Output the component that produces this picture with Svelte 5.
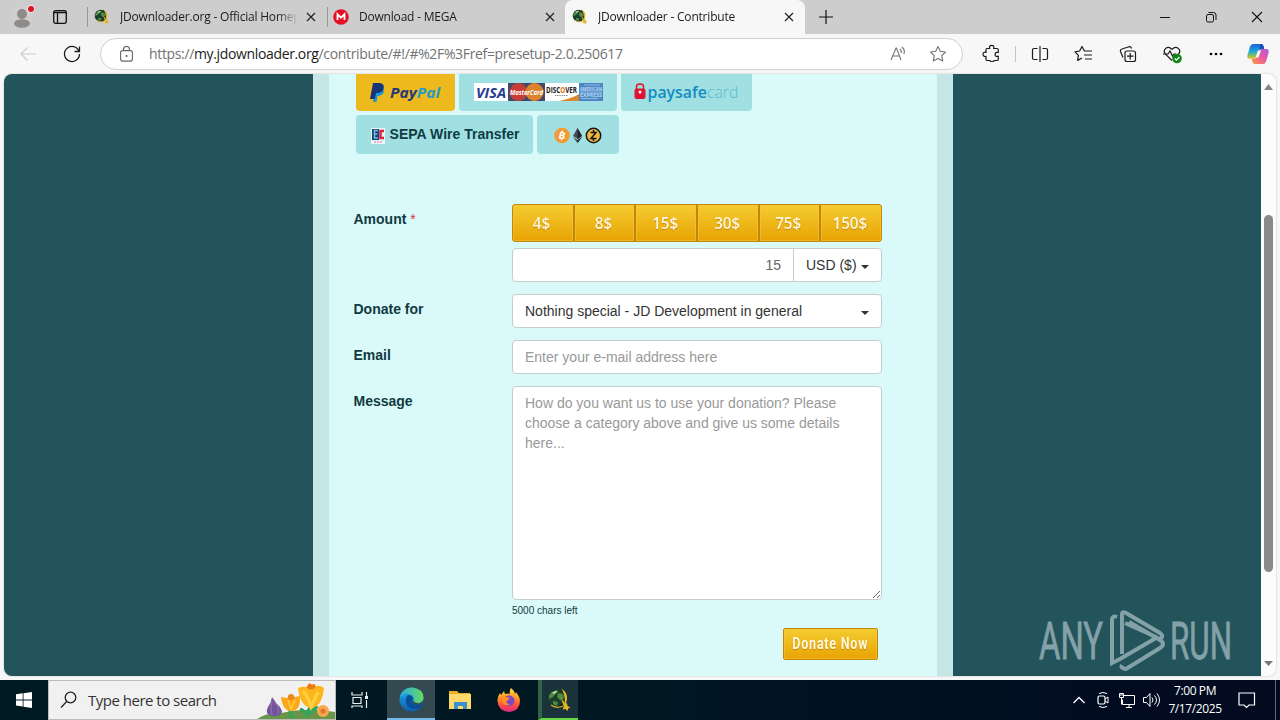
<script lang="ts">
  // Browser tabs, left to right
  const tabs = [
    { title: 'JDownloader.org - Official Homepage', icon: 'jd', active: false },
    { title: 'Download - MEGA', icon: 'mega', active: false },
    { title: 'JDownloader - Contribute', icon: 'jd', active: true }
  ];

  const amounts = [4, 8, 15, 30, 75, 150];

  let amount = $state(15);
  let email = $state('');
  let message = $state('');
  let charsLeft = $derived(5000 - message.length);
</script>

<!-- Globe with the gold swoosh and arrow -->
{#snippet jdIcon()}
  <svg class="jd-icon" viewBox="0 0 24 24" aria-hidden="true">
    <circle cx="10" cy="10" r="9" fill="#1c3d2c" />
    <path d="M2 8q1-4 6-5l1 2-3 4-4 2zM11 5l5 1 1 4-4 2-3-3zM6 13l5 1-1 4-4-2z" fill="#4a8b45" />
    <path d="M5 4.500l4-2 2 1-4 3z" fill="#a9cf95" />
    <path d="M14 2q5 3 4 9-1 5-6 8" fill="none" stroke="#171c14" stroke-width="1.500" />
    <path d="M14 .5q7 4 6 11-.5 5-4 9.500 2-5 1.800-9Q17.500 5 14 .5z" fill="#e2b727" />
    <path d="M4 17q5 4 12 1" fill="none" stroke="#d8ad2b" stroke-width="1.300" />
    <path d="M13.500 9l5 7 1.500-1 .5 3 3 1.500-2 .5-1 3-2-2-3 .5 1.500-2.500z" fill="#e2b727" />
  </svg>
{/snippet}

{#snippet closeIcon()}
  <svg class="close" width="10" height="10" viewBox="0 0 10 10"><path d="M1 1l8 8M9 1L1 9" fill="none" stroke="#222" stroke-width="1.2" /></svg>
{/snippet}

<div class="desktop">
  <!-- Tab strip -->
  <header class="tabstrip">
    <div class="profile">
      <svg width="44" height="34" viewBox="0 0 44 34">
        <circle cx="22" cy="17" r="11" fill="#d1cfce" />
        <circle cx="22" cy="14" r="5" fill="#8f8b89" />
        <ellipse cx="22" cy="23.500" rx="8" ry="4.2" fill="#8f8b89" />
        <circle cx="31" cy="9" r="4" fill="#f2dfdf" />
        <circle cx="31" cy="9" r="3" fill="#dc1626" />
      </svg>
    </div>
    <div class="tab-actions">
      <svg width="14" height="14" viewBox="0 0 14 14"><rect x=".7" y=".7" width="12.6" height="12.6" rx="2" fill="none" stroke="#111" stroke-width="1.3" /><path d="M1 2.500h12M4.5 3v10" stroke="#111" stroke-width="1.300" /></svg>
    </div>
    {#each tabs as tab}
      <div class="tab" class:active={tab.active}>
        {#if tab.icon === 'mega'}
          <svg class="favicon" width="16" height="16" viewBox="0 0 16 16"><circle cx="8" cy="8" r="7.8" fill="#e41226" /><path d="M4.5 11V5.2L8 8.7l3.5-3.5V11" fill="none" stroke="#fff" stroke-width="1.8" /></svg>
        {:else}
          <span class="favicon">{@render jdIcon()}</span>
        {/if}
        <span class="title">{tab.title}</span>
        {@render closeIcon()}
      </div>
    {/each}
    <svg class="new-tab" width="14" height="14" viewBox="0 0 14 14"><path d="M7 0v14M0 7h14" stroke="#111" stroke-width="1.2" /></svg>
    <div class="window-buttons">
      <svg viewBox="0 0 46 34"><path d="M18 17.5h10" stroke="#111" /></svg>
      <svg viewBox="0 0 46 34"><rect x="18.5" y="14.5" width="7" height="7.5" rx="1.5" fill="none" stroke="#111" /><path d="M20.5 12.5h5q2.5 0 2.5 2.5v5" fill="none" stroke="#111" /></svg>
      <svg viewBox="0 0 46 34"><path d="M18 12l10 10M28 12L18 22" stroke="#111" stroke-width="1.1" /></svg>
    </div>
  </header>

  <!-- Address bar and toolbar -->
  <div class="toolbar">
    <svg class="tool" viewBox="0 0 44 40"><path d="M36 20H21M27.5 13.5L21 20l6.5 6.5" fill="none" stroke="#ccc" stroke-width="1.2" /></svg>
    <svg class="tool" viewBox="0 0 44 40"><path d="M29 17.3A7.5 7.5 0 1 0 29.5 20M29.5 12.5v5h-5" fill="none" stroke="#1b1b1b" stroke-width="1.3" /></svg>
    <div class="address">
      <svg class="lock" width="13" height="16" viewBox="0 0 13 16"><rect x=".6" y="4.600" width="11.800" height="10.500" rx="2" fill="none" stroke="#666" stroke-width="1.1" /><path d="M3.500 4.500V3.5a3 3 0 0 1 6 0v1" fill="none" stroke="#666" stroke-width="1.1" /><circle cx="6.500" cy="10" r="1" fill="#555" /></svg>
      <span class="url">https://<b>my.jdownloader.org</b>/contribute/#!/#%2F%3Fref=presetup-2.0.250617</span>
      <svg class="read" width="16" height="16" viewBox="0 0 16 16"><path d="M1 14L6 2h.5L11 14M2.8 10h6.4M10 3q2 2 1 4M12 1q3.5 3 1.8 7" fill="none" stroke="#747474" stroke-width="1.1" /></svg>
      <svg class="star" width="18" height="18" viewBox="0 0 18 18"><path d="M9 1.5l2.3 4.7 5.2.8-3.7 3.7.9 5.2L9 13.4l-4.7 2.5.9-5.2L1.5 7l5.2-.8z" fill="none" stroke="#747474" stroke-width="1.1" stroke-linejoin="round" /></svg>
    </div>
    <svg class="tool puzzle" viewBox="0 0 44 40"><path d="M17 14.500h2.700q-.8-3.200 2-3.200t2 3.200H27q1.300 0 1.300 1.300v2.700q-3.200-.7-3.200 1.900t3.200 1.900v2.900q0 1.300-1.300 1.300h-2.700q0 1-2.300 1t-2.300-1H17.300q-1.300 0-1.300-1.300v-2.700q-3 .3-3-2.200t3-2v-2.500q0-1.300 1-1.300z" fill="none" stroke="#1b1b1b" stroke-width="1.2" /></svg>
    <i class="rule"></i>
    <svg class="tool" viewBox="0 0 44 40"><path d="M19.5 14.5H16q-1.500 0-1.500 1.500v8q0 1.500 1.500 1.500h3.500M24.500 14.500H28q1.500 0 1.500 1.500v8q0 1.500-1.500 1.500h-3.500M22 12v16" fill="none" stroke="#1b1b1b" stroke-width="1.2" /></svg>
    <svg class="tool" viewBox="0 0 44 40"><path d="M25 17h-2.600L20 12.500 17.600 17l-4.600.8 3.400 3.600-.8 5 4.400-2.400M23.500 17H30M22 21h8M23 25h7" fill="none" stroke="#1b1b1b" stroke-width="1.2" stroke-linejoin="round" /></svg>
    <svg class="tool" viewBox="0 0 44 40"><rect x="19" y="17" width="10.500" height="10.500" rx="2" fill="none" stroke="#1b1b1b" stroke-width="1.2" /><path d="M24.200 19v6.500M21 22.200h6.500M17 23.500l-2.500-6Q14 15.500 16 15l7-2.200q2-.5 2.500 1.700" fill="none" stroke="#1b1b1b" stroke-width="1.200" /></svg>
    <svg class="tool" viewBox="0 0 44 40"><path d="M22 26.500l-6.500-6.300C12 16 17.500 10.500 22 15.300 26.500 10.500 32 16 28.500 20.200M13 20h5l2-3 2.500 5 1.500-2h2" fill="none" stroke="#1b1b1b" stroke-width="1.200" /><circle cx="27" cy="24.500" r="4.800" fill="#108419" /><path d="M24.700 24.500l1.700 1.700 3-3.200" fill="none" stroke="#fff" stroke-width="1.200" /></svg>
    <svg class="tool" viewBox="0 0 44 40"><circle cx="17" cy="20" r="1.300" /><circle cx="22" cy="20" r="1.300" /><circle cx="27" cy="20" r="1.300" /></svg>
    <svg class="tool copilot" viewBox="0 0 24 24">
      <defs>
        <linearGradient id="coolRibbon" x1="0" y1="0" x2="0" y2="1"><stop offset="0" stop-color="#1762da" /><stop offset=".5" stop-color="#20a9dc" /><stop offset=".8" stop-color="#91c34d" /><stop offset="1" stop-color="#f7c53b" /></linearGradient>
        <linearGradient id="warmRibbon" x1="1" y1="0" x2="0" y2="1"><stop offset="0" stop-color="#a65be6" /><stop offset=".5" stop-color="#ec5a9b" /><stop offset="1" stop-color="#ff9a3e" /></linearGradient>
      </defs>
      <path d="M7 2h8q2 0 2.500 2l.6 3h-2.600q-2 0-2.700 2L11 14.500Q10 17 7.500 17H4Q.5 17 1.500 13L4 4.500Q5 2 7 2z" fill="url(#coolRibbon)" />
      <path d="M17 22H9q-2 0-2.500-2L6 17h2q2 0 2.700-2L13 9q1-2 3-2h4q3.500 0 2.500 4L20 19.500Q19 22 17 22z" fill="url(#warmRibbon)" />
      <path d="M14 2h1q2 0 2.500 2l.6 3h-2.600q-1.500 0-2 1z" fill="#1751b5" />
      <path d="M12 8.500h3l-2.500 7H9.500z" fill="#f7f7f7" />
    </svg>
  </div>

  <!-- Web page -->
  <main class="viewport">
    <div class="page">
      <section class="panel">
        <div class="payments">
          <button class="pay selected paypal" aria-label="PayPal">
            <svg width="71" height="20" viewBox="0 0 71 20">
              <path d="M6 5h7q3 6-4 8H7.500L6.500 19H3z" fill="#179bd7" />
              <path d="M3 0h7q5 1 3.500 6-1.500 4-6 4H6l-1.200 6H0z" fill="#173477" />
              <text class="logo-italic" x="20" y="14.500" font-size="15" textLength="50" lengthAdjust="spacingAndGlyphs"><tspan fill="#243a78">Pay</tspan><tspan fill="#249cc5">Pal</tspan></text>
            </svg>
          </button>
          <button class="pay cards" aria-label="Credit card">
            <svg width="130" height="19" viewBox="0 0 130 19">
              <path d="M1 0h34v18H1z" fill="#fff" />
              <text class="logo-italic" x="3" y="15" font-size="14.500" fill="#263a8f" textLength="30" lengthAdjust="spacingAndGlyphs">VISA</text>
              <path d="M35 0h37v18H35z" fill="#444968" />
              <circle cx="45.500" cy="9" r="9" fill="#c53d34" /><circle cx="61.500" cy="9" r="9" fill="#dc832f" />
              <text class="logo-italic" x="37" y="12" font-size="7.500" fill="#fff" textLength="33" lengthAdjust="spacingAndGlyphs">MasterCard</text>
              <path d="M72 0h34v18H72z" fill="#fff" /><path d="M86 18q14-3 20-7v7z" fill="#db872d" />
              <text class="logo-text" x="73" y="10" font-size="8" fill="#202020" textLength="31" lengthAdjust="spacingAndGlyphs">DISC<tspan fill="#dc7624">O</tspan>VER</text>
              <path d="M82 12.500h13" stroke="#777" stroke-dasharray="1 .8" />
              <path d="M106 0h24v18h-24z" fill="#4e85c3" /><path d="M111 2h16M107 9h22M108 15.500h17" stroke="#8dbde4" fill="none" />
              <text class="logo-text" x="107" y="7.500" font-size="4.500" fill="#b5dcf5" textLength="22" lengthAdjust="spacingAndGlyphs">AMERICAN</text>
              <text class="logo-text" x="107" y="14" font-size="4.500" fill="#b5dcf5" textLength="22" lengthAdjust="spacingAndGlyphs">EXPRESS</text>
            </svg>
          </button>
          <button class="pay paysafe" aria-label="paysafecard">
            <svg width="105" height="22" viewBox="0 0 105 22">
              <rect x=".5" y="6.500" width="11" height="10.500" rx="2" fill="#dc1431" />
              <path d="M2.500 8V4.500q0-2.500 3.500-2.500t3.500 2.500V8" fill="none" stroke="#dc1431" stroke-width="1.500" /><circle cx="6" cy="10" r="1.500" fill="#fff" />
              <text class="paysafe-text" x="13.500" y="15.500" font-size="17" textLength="91" lengthAdjust="spacingAndGlyphs"><tspan fill="#148cc2" font-weight="600">paysafe</tspan><tspan fill="#61b9cc" font-weight="300">card</tspan></text>
            </svg>
          </button>
          <button class="pay sepa">
            <svg width="14" height="16" viewBox="0 0 14 16"><path d="M0 0h14v16H0z" fill="#e9f5f8" /><path d="M1 1h7v11H1z" fill="#173f79" /><path d="M7 2.500H3.500v7.500H7M3.500 6h3" fill="none" stroke="#6cc2dc" stroke-width="1.500" /><path d="M13 3H9.500v7H13" fill="none" stroke="#da2439" stroke-width="2.500" /><path d="M3 14h8" stroke="#d97c8d" stroke-dasharray="2 1" /></svg>
            <span>SEPA Wire Transfer</span>
          </button>
          <button class="pay crypto" aria-label="Cryptocurrency">
            <svg width="48" height="17" viewBox="0 0 48 17">
              <circle cx="8" cy="8.500" r="7.800" fill="#f29b32" />
              <text class="logo-text" x="8" y="12" font-size="10" fill="#fff" text-anchor="middle" transform="rotate(12 8 8.500)">B</text>
              <path d="M8.500 3.500v1.500M7.500 12v1.500" stroke="#fff" />
              <path d="M23.500 1l4.500 8-4.500 3L19 9zM19 10l4.500 3 4.500-3-4.500 6z" fill="#4b4d55" /><path d="M23.500 1l4.500 8-4.500 3zM23.500 13l4.500-3-4.500 6z" fill="#20242c" />
              <circle cx="39.500" cy="8.500" r="7.200" fill="#efb744" stroke="#171717" stroke-width="1.500" />
              <path d="M36.500 5.500h5.500l-5 6h5.500M39.500 3v2M39.500 12v2" fill="none" stroke="#151515" stroke-width="1.500" />
            </svg>
          </button>
        </div>

        <form onsubmit={(event) => event.preventDefault()}>
          <div class="row">
            <span class="label">Amount <em>*</em></span>
            <div class="field">
              <div class="amounts">
                {#each amounts as value}
                  <button type="button" class="gold" onclick={() => (amount = value)}><span>{value}$</span></button>
                {/each}
              </div>
              <div class="amount-input">
                <input class="control" aria-label="Amount" bind:value={amount} />
                <button type="button" class="control currency">USD ($)<i class="caret"></i></button>
              </div>
            </div>
          </div>
          <div class="row">
            <span class="label">Donate for</span>
            <button type="button" class="field control select"><span>Nothing special - JD Development in general</span><i class="caret"></i></button>
          </div>
          <div class="row">
            <label class="label" for="email">Email</label>
            <input id="email" class="field control" bind:value={email} placeholder="Enter your e-mail address here" />
          </div>
          <div class="row message-row">
            <label class="label" for="message">Message</label>
            <div class="field">
              <textarea id="message" class="control" bind:value={message} placeholder="How do you want us to use your donation? Please choose a category above and give us some details here..."></textarea>
              <div class="chars">{charsLeft} chars left</div>
            </div>
          </div>
          <button class="gold donate"><span>Donate Now</span></button>
        </form>
      </section>

      <svg class="watermark" width="194" height="62" viewBox="0 0 194 62">
        <text x="0" y="49" textLength="64" lengthAdjust="spacingAndGlyphs">ANY</text>
        <path d="M78 7q-5-2-5 3v43l8-4 36-21M83 44V4q0-3 4-1l34 20q4 3 1 5t-5-1L86 13M83 55q-2 3 4 4l34-21q6-4 0-8L90 12" />
        <text x="131" y="49" textLength="62" lengthAdjust="spacingAndGlyphs">RUN</text>
      </svg>
    </div>
    <div class="scrollbar">
      <svg width="9" height="6" viewBox="0 0 9 6"><path d="M0 6l4.500-6L9 6z" fill="#858585" /></svg>
      <div class="thumb"></div>
      <svg width="9" height="5" viewBox="0 0 9 5"><path d="M0 0l4.500 5L9 0z" fill="#777" /></svg>
    </div>
  </main>

  <!-- Windows taskbar -->
  <footer class="taskbar">
    <div class="start"><svg width="16" height="16" viewBox="0 0 16 16"><path d="M0 2.300L6.700 1.300v6.200H0zM7.500 1.200L16 0v7.500H7.500zM0 8.400h6.700v6.200L0 13.600zM7.500 8.400H16V16l-8.500-1.200z" fill="#fff" /></svg></div>
    <div class="search">
      <svg class="lens" width="18" height="18" viewBox="0 0 18 18"><circle cx="10.500" cy="6.500" r="5.300" fill="none" stroke="#222" stroke-width="1.300" /><path d="M6.700 10.500L1 16.500" stroke="#222" stroke-width="1.300" /></svg>
      <span>Type here to search</span>
      <svg class="flowers" width="78" height="38" viewBox="0 0 78 38">
        <path d="M0 38q10-7 24-6 26-6 54-1v7z" fill="#699548" />
        <path d="M50 36q0-6 4-10M36 37q-3-4-3-9M50 33q7-3 10-8M43 28q5 2 7 7" stroke="#35a35c" stroke-width="3.500" fill="none" />
        <path d="M15 16q-1 6-4 10-4 7 4 9 10 1 10-5-1-4-5-7z" fill="#75549e" /><path d="M15 20q-2 8 0 14M17 21q6 5 4 12" fill="none" stroke="#9678b4" />
        <path d="M24 16l6 1 4-4 4 3 5-1q1 14-8 15t-11-14z" fill="#fda51b" /><path d="M31 19l3 9 4-9" stroke="#ffc636" stroke-width="2" fill="none" /><circle cx="34" cy="16" r="3" fill="#e9861c" />
        <path d="M41 7q4-2 8-1 5-5 10-1 4-1 8 2-2 19-13 20-11-2-13-20z" fill="#fdb51c" /><path d="M46 10q5 5 8 16l7-15" stroke="#ffd141" stroke-width="3" fill="none" /><path d="M50 7q1-7 5-3 4-3 3 3-4 3-8 0z" fill="#ea7c1e" />
        <circle cx="66" cy="30" r="6" fill="#f6a84b" /><circle cx="66" cy="30" r="2.600" fill="#e2762e" />
      </svg>
    </div>
    <div class="task task-view"><svg width="18" height="18" viewBox="0 0 18 18"><path d="M1 1v3h10V1M2 6.500h8v6H2zM1 17v-2h10v2M15.500 1v4M15.500 9v8" fill="none" stroke="#e9eef0" stroke-width="1.200" /><path d="M14 5h3v3h-3z" fill="#e9eef0" /></svg></div>
    <div class="task edge"><svg width="25" height="25" viewBox="0 0 25 25">
      <defs><linearGradient id="edgeBlue" x2="0" y2="1"><stop stop-color="#20bdd5" /><stop offset=".5" stop-color="#1687d4" /><stop offset="1" stop-color="#125ca9" /></linearGradient><linearGradient id="edgeGreen"><stop stop-color="#29a8df" /><stop offset="1" stop-color="#67dc62" /></linearGradient></defs>
      <circle cx="12.500" cy="12.500" r="12" fill="url(#edgeBlue)" /><path d="M1 10Q4 0 14 .7 25 2 24.500 11q-1 6-8 6-5-1-2-4 1-5-4-6-5-1-9 3z" fill="url(#edgeGreen)" /><path d="M9 8q5 0 5 4-3 5 4 6 3 0 6-2-1 4-4 6-12 1-13-7-1-4 2-7z" fill="#0a4f9c" /><path d="M14 13q-2 4 4 5 3 0 6-2l1-3-4 3q-5 1-7-3z" fill="#36474c" />
    </svg></div>
    <div class="task"><svg width="22" height="19" viewBox="0 0 22 19"><path d="M0 0h8l2 2h11v15H0z" fill="#edac26" /><path d="M0 3h22v15H0z" fill="#ffd969" /><path d="M5 18v-7h13v7h-4v-3H9v3z" fill="#3a8fd0" /></svg></div>
    <div class="task"><svg width="24" height="24" viewBox="0 0 24 24">
      <defs><linearGradient id="fox" x2="0" y2="1"><stop stop-color="#ffe23e" /><stop offset=".45" stop-color="#ff8c24" /><stop offset=".8" stop-color="#ff3c54" /><stop offset="1" stop-color="#db298b" /></linearGradient></defs>
      <path d="M3 5l1 2 3-4 1 3q3-1 5 0-1-3 1-6 3 2 4 6l1-2q4 5 4 9 0 10-11 11Q1 23 .5 13 0 9 3 5z" fill="url(#fox)" /><path d="M8 9q5-4 9 1 2 5-3 8-7 1-8-5 4 2 5-1z" fill="#8147be" /><path d="M4 8q3-1 5 1l4 1q-2 2-4 3 0 3 4 3-4 3-7-1z" fill="#ff9125" />
    </svg></div>
    <div class="task jd-task">{@render jdIcon()}</div>
    <div class="tray">
      <svg class="tray-icon" viewBox="0 0 24 24"><path d="M6.500 15l5.500-5.500 5.500 5.500" fill="none" stroke="#fff" stroke-width="1.300" /></svg>
      <svg class="tray-icon" viewBox="0 0 24 24"><rect x="7" y="8" width="7" height="8" rx="1.500" fill="none" stroke="#fff" stroke-width="1.200" /><path d="M14 11l3-2v6l-3-2M8 5.500q4-2 8 0M8 18.500q4 2 8 0" fill="none" stroke="#fff" /></svg>
      <svg class="tray-icon" viewBox="0 0 24 24"><path d="M9 7.500h10.500v9H7.500v-5M11 19.500h6M14 16.500v3M4.500 5.500h4v4h-4zM6.500 9.500v7M4 7h5" fill="none" stroke="#fff" /></svg>
      <svg class="tray-icon" viewBox="0 0 24 24"><path d="M4.500 9.500h3l3.500-4v13l-3.500-4h-3zM13 9.500q2 2.500 0 5M15.500 7.500q4 4.500 0 9M18 5.500q5 6.500 0 13" fill="none" stroke="#fff" /></svg>
      <div class="clock"><span>7:00 PM</span><span>7/17/2025</span></div>
      <svg class="notice" width="18" height="17" viewBox="0 0 18 17"><path d="M1 1h15.500v12H11l-2.500 2.500L6 13H1z" fill="none" stroke="#fff" stroke-width="1.200" /></svg>
      <i class="show-desktop"></i>
    </div>
  </footer>
</div>

<style>
  :global(body) {
    overflow: hidden;
  }

  .desktop,
  .desktop * {
    box-sizing: border-box;
  }

  .desktop {
    width: 1280px;
    height: 720px;
    display: flex;
    flex-direction: column;
    background: #f7f7f7;
    font-family: 'Open Sans', 'Noto Sans', sans-serif;
    font-size: 12px;
    color: #1b1b1b;
  }

  svg {
    display: block;
    flex: none;
  }

  button,
  input,
  textarea {
    margin: 0;
    font: inherit;
  }

  /* Tab strip */
  .tabstrip {
    height: 34px;
    display: flex;
    align-items: center;
    background: #cdcdcd;
  }

  .profile {
    width: 44px;
  }

  .tab-actions {
    width: 44px;
    height: 20px;
    padding: 3px 0 0 9px;
    border-right: 1px solid #999;
  }

  .tab {
    width: 240px;
    height: 20px;
    display: flex;
    align-items: center;
    padding: 0 11px 0 6px;
    border-right: 1px solid #999;
  }

  .tab:nth-of-type(4) {
    width: 237px;
    padding-right: 10px;
    padding-left: 5px;
    border: 0;
  }

  .tab.active {
    height: 34px;
    border: 0;
    padding: 0 11px 0 7px;
    background: #f7f7f7;
    border-radius: 8px 8px 0 0;
  }

  .favicon {
    width: 16px;
    height: 16px;
    margin-right: 10px;
    flex: none;
  }

  .title {
    flex: 1;
    overflow: hidden;
    white-space: nowrap;
    letter-spacing: -0.2px;
    margin-right: 8px;
    margin-top: -1px;
    mask-image: linear-gradient(90deg, #000 88%, transparent);
  }

  .jd-icon {
    width: 100%;
    height: 100%;
  }

  .new-tab {
    margin-left: 14px;
  }

  .window-buttons {
    display: flex;
    margin-left: auto;
  }

  .window-buttons svg {
    width: 46px;
    height: 34px;
  }

  /* Toolbar */
  .toolbar {
    height: 40px;
    display: flex;
    align-items: center;
  }

  .tool {
    width: 44px;
    height: 40px;
  }

  .tool:nth-child(2) {
    margin-left: 6px;
  }

  .address {
    width: 863px;
    height: 32px;
    display: flex;
    align-items: center;
    margin-left: 6px;
    border: 1px solid #cfcfcf;
    border-radius: 16px;
    background: #fff;
  }

  .lock {
    margin: 0 16px 1px 19px;
  }

  .url {
    flex: 1;
    font-size: 14px;
    line-height: 20px;
    letter-spacing: -0.35px;
    color: #727272;
  }

  .url b {
    color: #1b1b1b;
    font-weight: 400;
  }

  .read {
    margin-right: 23px;
  }

  .star {
    margin-right: 15px;
  }

  .puzzle {
    margin-left: 7px;
  }

  .rule {
    width: 1px;
    height: 16px;
    margin: 0 2px 0 1px;
    background: #c5c5c5;
  }

  .copilot {
    width: 24px;
    height: 24px;
    margin-left: 8px;
  }

  /* Page */
  .viewport {
    height: 602px;
    margin: 0 4px;
    display: flex;
    overflow: hidden;
    border-radius: 8px;
    background: #fcfcfc;
    box-shadow: 0 0 2px #bbb;
  }

  .page {
    width: 1257px;
    position: relative;
    padding-left: 309px;
    background: #23545c;
    font-family: 'Liberation Sans', Arial, sans-serif;
    font-size: 14px;
  }

  .panel {
    width: 640px;
    height: 602px;
    padding: 0 16px 0 24px;
    border: solid #c5e6e6;
    border-width: 0 16px;
    background: #d9faf9;
  }

  .payments {
    width: 420px;
    height: 80px;
    display: flex;
    flex-wrap: wrap;
    align-content: flex-start;
    gap: 4px;
    margin-left: 3px;
  }

  .pay {
    height: 39px;
    display: flex;
    align-items: center;
    justify-content: center;
    border: 0;
    border-radius: 4px;
    background: #a0e0e2;
    padding: 0;
    font-weight: 700;
    color: #103b42;
  }

  .pay svg {
    overflow: visible;
  }

  .paypal,
  .cards,
  .paysafe {
    height: 37px;
    border-radius: 0 0 4px 4px;
  }

  .paypal {
    width: 99px;
  }

  .pay.selected {
    background: #edb91d;
  }

  .cards {
    width: 158px;
  }

  .paysafe {
    width: 131px;
  }

  .sepa {
    width: 177px;
    gap: 5px;
    padding-left: 1px;
  }

  .sepa span {
    margin-top: -2px;
  }

  .sepa svg {
    margin-top: 2px;
  }

  .crypto {
    width: 82px;
    padding-top: 2px;
  }

  .logo-italic {
    font-family: 'Open Sans', sans-serif;
    font-style: italic;
    font-weight: 700;
  }

  .logo-text {
    font-family: 'Open Sans', sans-serif;
    font-weight: 700;
  }

  .paysafe-text {
    font-family: 'Open Sans', sans-serif;
  }

  form {
    padding-top: 50px;
  }

  .row {
    display: flex;
    align-items: flex-start;
    margin-bottom: 12px;
  }

  .label {
    width: 159px;
    padding: 7px 0 0 0.5px;
    line-height: 16px;
    font-weight: 700;
    color: #103b42;
  }

  .label em {
    color: #e2323b;
    font-style: normal;
    font-weight: 400;
  }

  .field {
    width: 370px;
  }

  .amounts {
    display: grid;
    grid-template-columns: repeat(6, 1fr);
    margin-bottom: 6px;
  }

  .gold {
    height: 38px;
    padding: 0 2px 2px 0;
    border: 1px solid #c28708;
    background: linear-gradient(#f4cc31, #e9a303);
    box-shadow: inset 0 0 0 1px #f5c84180;
    font-family: 'Open Sans', sans-serif;
    font-size: 16.5px;
    font-weight: 600;
    color: #fff8dc;
    text-shadow: 0 1px 1px #a4690099;
  }

  .gold span {
    display: inline-block;
    transform: scaleX(0.92);
  }

  .gold:first-child {
    border-radius: 3px 0 0 3px;
  }

  .gold:last-child {
    border-radius: 0 3px 3px 0;
  }

  .control {
    height: 34px;
    padding: 6px 12px;
    border: 1px solid #c5cccc;
    border-radius: 4px;
    background: #fff;
    color: #333;
    font-size: 14px;
    line-height: 20px;
    outline: 0;
  }

  .control::placeholder {
    color: #999;
    opacity: 1;
  }

  .amount-input {
    display: flex;
  }

  .amount-input input {
    width: 282px;
    border-radius: 4px 0 0 4px;
    text-align: right;
    color: #666;
  }

  .currency {
    width: 89px;
    margin-left: -1px;
    border-radius: 0 4px 4px 0;
  }

  .currency,
  .select {
    display: flex;
    align-items: center;
    justify-content: space-between;
  }

  .caret {
    margin-top: 3px;
    border: solid transparent;
    border-width: 4px 4px 0;
    border-top-color: #333;
  }

  textarea.control {
    width: 370px;
    height: 214px;
    display: block;
    resize: both;
  }

  .chars {
    margin-top: 5px;
    font-size: 10px;
    line-height: 12px;
    color: #103b42;
  }

  .message-row {
    margin: 0;
  }

  .gold.donate {
    width: 95px;
    height: 32px;
    display: block;
    margin: 11px 43px 0 auto;
    border-radius: 2px;
    font-family: 'Roboto', sans-serif;
    font-size: 17px;
    font-weight: 700;
    white-space: nowrap;
  }

  .donate span {
    margin: 0 -20px 0 -18px;
    letter-spacing: 1px;
    transform: scaleX(0.74);
  }

  .watermark {
    position: absolute;
    top: 536px;
    left: 1035px;
    overflow: visible;
  }

  .watermark text {
    font-family: 'Roboto', sans-serif;
    font-size: 52px;
    fill: #83a1a7;
    stroke: #83a1a7;
    stroke-width: 0.8;
  }

  .watermark path {
    fill: none;
    stroke: #83a1a7;
    stroke-width: 4;
  }

  .scrollbar {
    width: 15px;
    display: flex;
    flex-direction: column;
    align-items: center;
    padding: 10px 0;
  }

  .thumb {
    width: 9px;
    height: 357px;
    margin: 125px 0 auto;
    border-radius: 5px;
    background: #898989;
  }

  /* Taskbar */
  .taskbar {
    height: 40px;
    margin-top: 4px;
    display: flex;
    background: linear-gradient(90deg, #001a22, #001722 50%, #020b20 90%);
  }

  .start {
    width: 48px;
    display: flex;
    align-items: center;
    justify-content: center;
  }

  .search {
    width: 288px;
    display: flex;
    align-items: center;
    padding-left: 11px;
    border: 1px solid #bbb;
    background: #f1f1f1;
    font-size: 15px;
    letter-spacing: -0.5px;
    color: #333;
  }

  .search span {
    margin-left: 10px;
    white-space: nowrap;
  }

  .flowers {
    margin-left: auto;
  }

  .task {
    width: 49px;
    display: flex;
    align-items: center;
    justify-content: center;
  }

  .task-view {
    width: 51px;
    padding-right: 3px;
  }

  .edge {
    width: 48px;
    background: #344950;
    border-bottom: 2px solid #76b9ed;
  }

  .jd-task {
    width: 40px;
    margin-left: 5px;
    padding: 7px 7px 5px 5px;
    border-left: 4px solid #306444;
    border-bottom: 2px solid #62d843;
    background: #1a333b;
  }

  .tray {
    display: flex;
    align-items: center;
    margin-left: auto;
    color: #fff;
  }

  .tray-icon {
    width: 24px;
    height: 24px;
  }

  .clock {
    width: 64px;
    display: flex;
    flex-direction: column;
    align-items: center;
    line-height: 18px;
    letter-spacing: -0.4px;
  }

  .notice {
    margin: 0 19px 0 11px;
  }

  .show-desktop {
    width: 5px;
    height: 40px;
    border-left: 1px solid #626a77;
  }
</style>
